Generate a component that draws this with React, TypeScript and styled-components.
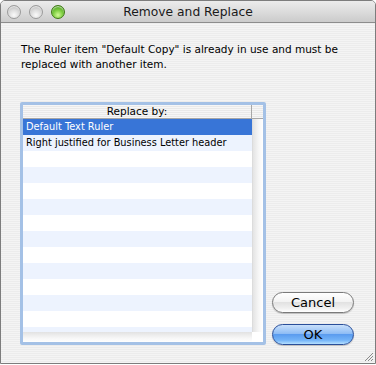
import React from "react";
import styled, { createGlobalStyle } from "styled-components";

const Global = createGlobalStyle`
  html, body { margin: 0; padding: 0; background: #ffffff; }
  * { box-sizing: border-box; }
`;

const FONT = `"DejaVu Sans", "Liberation Sans", sans-serif`;

const Window = styled.div`
  position: relative;
  width: 376px;
  height: 364px;
  border: 1px solid #7d7d7d;
  border-radius: 5px 5px 0 0;
  overflow: hidden;
  display: flex;
  flex-direction: column;
  font-family: ${FONT};
  color: #000;
  background: repeating-linear-gradient(
    to bottom,
    #ececec 0px,
    #ececec 1px,
    #f4f4f4 1px,
    #f4f4f4 2px
  );
`;

const TitleBar = styled.div`
  height: 22px;
  flex: none;
  display: grid;
  grid-template-columns: 1fr auto 1fr;
  align-items: center;
  border-bottom: 1px solid #8c8c8c;
  background: linear-gradient(to bottom, #ececec 0%, #dcdcdc 50%, #cbcbcb 100%);
`;

const Lights = styled.div`
  display: flex;
  gap: 8px;
  padding-left: 6px;
  align-items: center;
`;

const Light = styled.span<{ $green?: boolean }>`
  width: 14px;
  height: 14px;
  border-radius: 50%;
  border: 1px solid ${(p) => (p.$green ? "#3d7a12" : "#9a9a9a")};
  background: ${(p) =>
    p.$green
      ? "radial-gradient(circle at 50% 75%, #d2fa96 0%, #7ccd40 45%, #3c8a14 100%)"
      : "radial-gradient(circle at 50% 75%, #fafafa 0%, #dadada 50%, #a9a9a9 100%)"};
  box-shadow: inset 0 1px 1px rgba(255, 255, 255, 0.7);
`;

const Title = styled.div`
  font-size: 12.3px;
  color: #1a1a1a;
  padding-top: 1px;
  white-space: nowrap;
`;

const Body = styled.div`
  flex: 1;
  display: flex;
  flex-direction: column;
  padding: 19px 19px 0 19px;
`;

const Message = styled.p`
  margin: 0 0 0 1px;
  font-size: 10.5px;
  line-height: 15px;
  width: 336px;
`;

const Content = styled.div`
  display: flex;
  gap: 6px;
  margin-top: 30px;
`;

const ListRing = styled.div`
  width: 246px;
  height: 243px;
  border: 3px solid #a4c1e6;
  border-radius: 2px;
  display: flex;
  flex-direction: column;
  background: #ffffff;
  box-shadow: inset 0 0 0 1px #7b9fd0;
`;

const ListInner = styled.div`
  flex: 1;
  display: grid;
  grid-template-columns: 1fr 11px;
  grid-template-rows: 14px 1fr 10px;
  overflow: hidden;
`;

const stripes = `repeating-linear-gradient(
    to bottom,
    #f6f6f6 0px,
    #f6f6f6 1px,
    #e9e9e9 1px,
    #e9e9e9 2px
  )`;

const Header = styled.div`
  font-size: 10.5px;
  text-align: center;
  line-height: 13px;
  border-bottom: 1px solid #a7a7a7;
  border-right: 1px solid #a7a7a7;
  background: ${stripes};
`;

const HeaderEnd = styled.div`
  border-bottom: 1px solid #a7a7a7;
  background: ${stripes};
`;

const Rows = styled.div`
  overflow: hidden;
  display: flex;
  flex-direction: column;
  box-shadow: 0 2px 3px rgba(0, 0, 0, 0.12);
`;

const Row = styled.div<{ $selected?: boolean; $alt?: boolean }>`
  height: 16px;
  flex: none;
  font-size: 9.8px;
  line-height: 16px;
  padding-left: 3px;
  white-space: nowrap;
  color: ${(p) => (p.$selected ? "#ffffff" : "#000000")};
  background: ${(p) => (p.$selected ? "#3875d7" : p.$alt ? "#edf3fe" : "#ffffff")};
`;

const VTrack = styled.div`
  background: linear-gradient(to right, #e4e4e4, #f7f7f7 60%, #ffffff);
  border-left: 1px solid #dcdcdc;
`;

const HTrack = styled.div`
  background: linear-gradient(to bottom, #e2e2e2, #f6f6f6 60%, #ffffff);
`;

const Corner = styled.div`
  background: #ffffff;
`;

const Buttons = styled.div`
  display: flex;
  flex-direction: column;
  justify-content: flex-end;
  gap: 11px;
  height: 243px;
`;

const Button = styled.button<{ $primary?: boolean }>`
  width: 82px;
  height: 21px;
  border-radius: 11px;
  font-family: ${FONT};
  font-size: 13px;
  line-height: 19px;
  padding: 0;
  color: #000;
  border: 1px solid ${(p) => (p.$primary ? "#2a4f9a" : "#7a7a7a")};
  background: ${(p) =>
    p.$primary
      ? "linear-gradient(to bottom, #c9e0fb 0%, #8fbdf5 45%, #5b9cef 50%, #74b4f8 80%, #b5e0ff 100%)"
      : "linear-gradient(to bottom, #ffffff 0%, #f3f3f3 45%, #e2e2e2 50%, #f0f0f0 80%, #ffffff 100%)"};
  box-shadow: 0 1px 1px rgba(0, 0, 0, 0.2);
`;

const Grip = styled.svg`
  position: absolute;
  right: 1px;
  bottom: 1px;
`;

const items = ["Default Text Ruler", "Right justified for Business Letter header"];

export default function App() {
  const rows = Array.from({ length: 14 }, (_, i) => i);
  return (
    <>
      <Global />
      <Window>
        <TitleBar>
          <Lights>
            <Light />
            <Light />
            <Light $green />
          </Lights>
          <Title>Remove and Replace</Title>
          <div />
        </TitleBar>
        <Body>
          <Message>
            The Ruler item "Default Copy" is already in use and must be replaced with another item.
          </Message>
          <Content>
            <ListRing>
              <ListInner>
                <Header>Replace by:</Header>
                <HeaderEnd />
                <Rows>
                  {rows.map((i) => (
                    <Row key={i} $selected={i === 0} $alt={i % 2 === 1}>
                      {items[i] ?? ""}
                    </Row>
                  ))}
                </Rows>
                <VTrack />
                <HTrack />
                <Corner />
              </ListInner>
            </ListRing>
            <Buttons>
              <Button>Cancel</Button>
              <Button $primary>OK</Button>
            </Buttons>
          </Content>
        </Body>
        <Grip width="11" height="11" viewBox="0 0 11 11">
          <path d="M10 2 L2 10 M10 5 L5 10 M10 8 L8 10" stroke="#8a8a8a" strokeWidth="1" />
        </Grip>
      </Window>
    </>
  );
}
